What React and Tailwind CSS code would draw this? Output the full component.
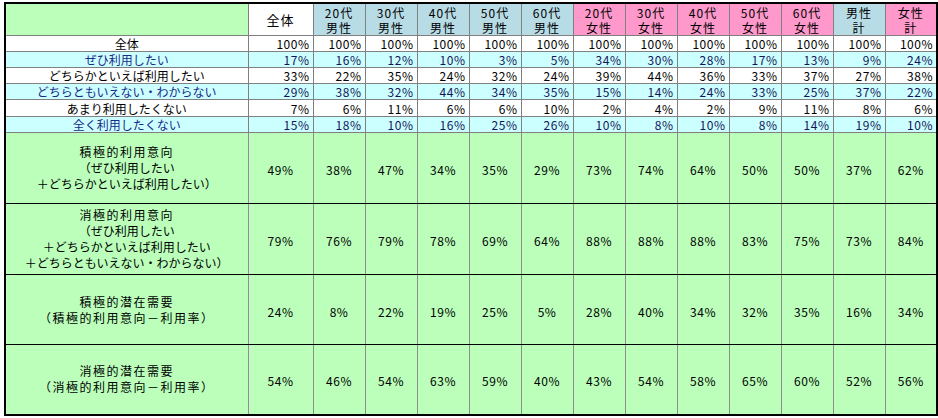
import React from 'react';

const cols = [
  { a: '20代', b: '男性', bg: 'bg-[#b8dce6]' },
  { a: '30代', b: '男性', bg: 'bg-[#b8dce6]' },
  { a: '40代', b: '男性', bg: 'bg-[#b8dce6]' },
  { a: '50代', b: '男性', bg: 'bg-[#b8dce6]' },
  { a: '60代', b: '男性', bg: 'bg-[#b8dce6]' },
  { a: '20代', b: '女性', bg: 'bg-[#ff99cc]' },
  { a: '30代', b: '女性', bg: 'bg-[#ff99cc]' },
  { a: '40代', b: '女性', bg: 'bg-[#ff99cc]' },
  { a: '50代', b: '女性', bg: 'bg-[#ff99cc]' },
  { a: '60代', b: '女性', bg: 'bg-[#ff99cc]' },
  { a: '男性', b: '計', bg: 'bg-[#b8dce6]' },
  { a: '女性', b: '計', bg: 'bg-[#ff99cc]' },
];

const rows = [
  { label: '全体', cyan: false, h: 'h-[16px]', v: [100, 100, 100, 100, 100, 100, 100, 100, 100, 100, 100, 100, 100] },
  { label: 'ぜひ利用したい', cyan: true, h: 'h-[16px]', v: [17, 16, 12, 10, 3, 5, 34, 30, 28, 17, 13, 9, 24] },
  { label: 'どちらかといえば利用したい', cyan: false, h: 'h-[16px]', v: [33, 22, 35, 24, 32, 24, 39, 44, 36, 33, 37, 27, 38] },
  { label: 'どちらともいえない・わからない', cyan: true, h: 'h-[16px]', v: [29, 38, 32, 44, 34, 35, 15, 14, 24, 33, 25, 37, 22] },
  { label: 'あまり利用したくない', cyan: false, h: 'h-[17px]', v: [7, 6, 11, 6, 6, 10, 2, 4, 2, 9, 11, 8, 6] },
  { label: '全く利用したくない', cyan: true, h: 'h-[16px]', v: [15, 18, 10, 16, 25, 26, 10, 8, 10, 8, 14, 19, 10] },
];

const bigRows = [
  {
    lines: [['積極的利用意向', true], ['（ぜひ利用したい', false], ['＋どちらかといえば利用したい）', false]],
    h: 'h-[71px]',
    v: [49, 38, 47, 34, 35, 29, 73, 74, 64, 50, 50, 37, 62],
  },
  {
    lines: [['消極的利用意向', true], ['（ぜひ利用したい', false], ['＋どちらかといえば利用したい', false], ['＋どちらともいえない・わからない）', false]],
    h: 'h-[71px]',
    v: [79, 76, 79, 78, 69, 64, 88, 88, 88, 83, 75, 73, 84],
  },
  {
    lines: [['積極的潜在需要', true], ['（積極的利用意向－利用率）', true]],
    h: 'h-[70px]',
    v: [24, 8, 22, 19, 25, 5, 28, 40, 34, 32, 35, 16, 34],
  },
  {
    lines: [['消極的潜在需要', true], ['（消極的利用意向－利用率）', true]],
    h: 'h-[70px]',
    v: [54, 46, 54, 63, 59, 40, 43, 54, 58, 65, 60, 52, 56],
  },
];

export default function App() {
  return (
    <div
      className="w-[938px] h-[418px] bg-white pl-[4px] pt-[2px] text-[12px] text-black"
      style={{ fontFamily: '"Noto Sans CJK JP", "Noto Sans", sans-serif' }}
    >
      <table className="table-fixed border-collapse border-2 border-black w-[932px]">
        <colgroup>
          <col className="w-[243px]" />
          <col className="w-[65px]" />
          {cols.map((c, i) => (
            <col key={i} className="w-[52px]" />
          ))}
        </colgroup>
        <thead>
          <tr className="h-[30px]">
            <th className="bg-[#bbffbb] border border-[#808080] p-0" />
            <th className="bg-white border border-[#808080] p-0 font-normal text-[13px] leading-[15px] tracking-[1px]">
              全体
            </th>
            {cols.map((c, i) => (
              <th
                key={i}
                className={`${c.bg} border border-[#808080] p-0 pt-[1px] font-normal text-[12px] leading-[15px] tracking-[1px]`}
              >
                <div>{c.a}</div>
                <div>{c.b}</div>
              </th>
            ))}
          </tr>
        </thead>
        <tbody>
          {rows.map((r, i) => (
            <tr key={i} className={`${r.h} ${r.cyan ? 'bg-[#ccffff]' : 'bg-white'}`}>
              <td className={`border border-[#808080] p-0 text-center leading-[15px] ${r.cyan ? 'text-[#1a2a8a]' : ''}`}>
                {r.label}
              </td>
              {r.v.map((n, j) => (
                <td
                  key={j}
                  className={`border border-[#808080] p-0 pr-[3px] text-right leading-[15px] tracking-[0.5px] ${r.cyan ? 'text-[#14145a]' : ''}`}
                >
                  {n}%
                </td>
              ))}
            </tr>
          ))}
          {bigRows.map((r, i) => (
            <tr key={i} className={`${r.h} bg-[#bbffbb]`}>
              <td
                className={`border border-[#808080] border-r-[#a084a8] p-0 text-center leading-[16px] ${
                  i > 0 ? 'border-t-black' : ''
                } border-b-black`}
              >
                {r.lines.map(([t, wide], k) => (
                  <div key={k} className={wide ? 'tracking-[1.5px]' : ''}>
                    {t}
                  </div>
                ))}
              </td>
              {r.v.map((n, j) => (
                <td
                  key={j}
                  className={`border border-[#8c8c8c] p-0 text-center align-middle leading-[16px] tracking-[0.5px] ${
                    i > 0 ? 'border-t-black' : ''
                  } border-b-black`}
                >
                  <span className="relative top-[2px]">{n}%</span>
                </td>
              ))}
            </tr>
          ))}
        </tbody>
      </table>
    </div>
  );
}
